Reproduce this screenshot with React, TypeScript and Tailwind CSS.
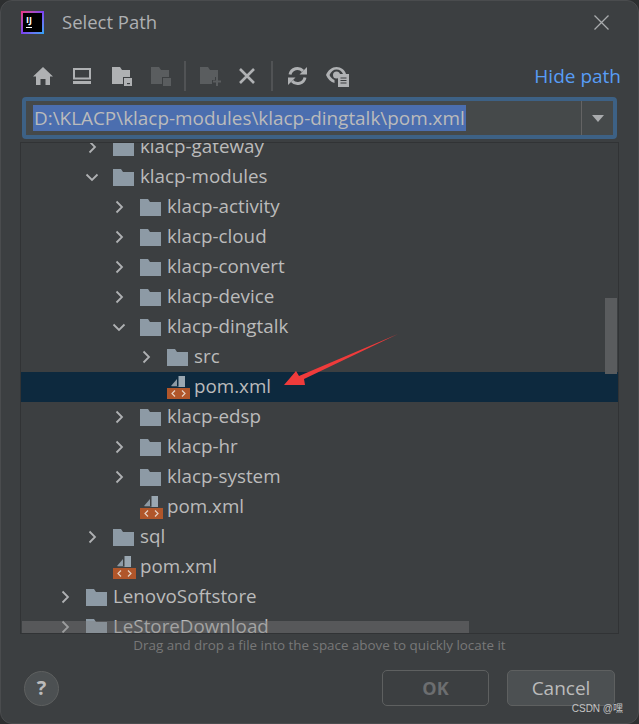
const rows = [
  { depth: 1, open: false, kind: 'folder', name: 'klacp-gateway' },
  { depth: 1, open: true, kind: 'folder', name: 'klacp-modules' },
  { depth: 2, open: false, kind: 'folder', name: 'klacp-activity' },
  { depth: 2, open: false, kind: 'folder', name: 'klacp-cloud' },
  { depth: 2, open: false, kind: 'folder', name: 'klacp-convert' },
  { depth: 2, open: false, kind: 'folder', name: 'klacp-device' },
  { depth: 2, open: true, kind: 'folder', name: 'klacp-dingtalk' },
  { depth: 3, open: false, kind: 'folder', name: 'src' },
  { depth: 3, open: false, kind: 'file', name: 'pom.xml', selected: true },
  { depth: 2, open: false, kind: 'folder', name: 'klacp-edsp' },
  { depth: 2, open: false, kind: 'folder', name: 'klacp-hr' },
  { depth: 2, open: false, kind: 'folder', name: 'klacp-system' },
  { depth: 2, open: false, kind: 'file', name: 'pom.xml' },
  { depth: 1, open: false, kind: 'folder', name: 'sql' },
  { depth: 1, open: false, kind: 'file', name: 'pom.xml' },
  { depth: 0, open: false, kind: 'folder', name: 'LenovoSoftstore' },
  { depth: 0, open: false, kind: 'folder', name: 'LeStoreDownload' },
]

const indents = ['w-[51px]', 'w-[78px]', 'w-[105px]', 'w-[132px]']

function Chevron({ open }: { open: boolean }) {
  return (
    <svg width="14" height="14" viewBox="0 0 14 14" fill="none" stroke="#afb1b3" strokeWidth="1.8">
      {open ? <path d="M1.5 4.5 7 10l5.5-5.5" /> : <path d="M4.5 1.5 10 7l-5.5 5.5" />}
    </svg>
  )
}

function Folder() {
  return (
    <svg width="21" height="18" viewBox="0 0 21 18" className="shrink-0">
      <path d="M0 1h8l2 3h11v14H0z" fill="#8d9aa5" />
    </svg>
  )
}

function PomIcon() {
  return (
    <svg width="23" height="24" viewBox="0 0 23 24" className="shrink-0">
      <path d="M4 11 10 4v7z" fill="#8d9aa5" />
      <path d="M11.5 1H18v11H4.500v-.2h7z" fill="#9aa7b1" />
      <rect x="0" y="13" width="23" height="11" fill="#b0562a" />
      <path d="M8 15.500 5 18.500l3 3M15 15.500l3 3-3 3" fill="none" stroke="#e6d2c4" strokeWidth="1.2" />
    </svg>
  )
}

function TreeRow({ row }: { row: (typeof rows)[number] }) {
  return (
    <div className={`flex h-[30px] items-center ${row.selected ? 'bg-[#0d293e]' : ''}`}>
      <div className={`${indents[row.depth]} flex shrink-0 justify-end`}>
        {row.kind === 'folder' && <Chevron open={row.open} />}
      </div>
      <div className={`flex items-center ${row.kind === 'folder' ? 'ml-[14px] gap-[6px]' : 'ml-[14px] gap-[4px]'}`}>
        {row.kind === 'folder' ? <Folder /> : <PomIcon />}
        <span className="pb-[2px] text-[18.800px] leading-[28px] text-[#bbbbbb]">{row.name}</span>
      </div>
    </div>
  )
}

function Toolbar() {
  const on = '#afb1b3'
  const off = '#5a5d5f'
  return (
    <div className="flex h-[40px] items-center pl-[32px]">
      {/* Home */}
      <svg width="20" height="18" viewBox="0 0 20 18" fill={on}>
        <path d="M10 0 20 9.500h-3V18h-4.500v-6h-5v6H3V9.500H0z" />
      </svg>
      {/* Desktop */}
      <svg width="18" height="16" viewBox="0 0 18 16" fill="none" className="ml-[20px]">
        <rect x="1" y="1" width="16" height="9.500" stroke={on} strokeWidth="2" />
        <rect x="0" y="13" width="18" height="3" fill={on} />
      </svg>
      {/* Project */}
      <svg width="20" height="19" viewBox="0 0 20 19" fill={on} className="ml-[21px]">
        <path d="M0 0h8l2 3h8v7h-7v7H0z" />
        <path d="M12 11h8v8h-8z" />
        <path d="M15 16h3v1.200h-3z" fill="#3c3f41" />
      </svg>
      {/* Module, disabled */}
      <svg width="20" height="19" viewBox="0 0 20 19" fill={off} className="ml-[19px]">
        <path d="M0 0h8l2 3h8v7h-7v7H0z" />
        <path d="M12 11h8v8h-8z" />
      </svg>
      <div className="ml-[13px] h-[30px] w-[2px] bg-[#515355]" />
      {/* New folder, disabled */}
      <svg width="21" height="19" viewBox="0 0 21 19" fill={off} className="ml-[14px]">
        <path d="M0 0h8l2 3h8v7h-3v3h-3v4H0z" />
        <path d="M16 10h2v3.500h3v2h-3V19h-2v-3.500h-3v-2h3z" />
      </svg>
      <svg width="16" height="16" viewBox="0 0 16 16" fill="none" stroke={on} strokeWidth="2.6" className="ml-[18px]">
        <path d="m1 1 14 14M15 1 1 15" />
      </svg>
      <div className="ml-[16px] h-[30px] w-[2px] bg-[#515355]" />
      {/* Refresh */}
      <svg width="19" height="20" viewBox="0 0 19 20" fill="none" stroke={on} strokeWidth="3" className="ml-[15px]">
        <path d="M2 8.500A7.500 7.500 0 0 1 15 5" />
        <path d="M17 11.500A7.500 7.500 0 0 1 4 15" />
        <path d="M11.500 8.500H19V1z" fill={on} stroke="none" />
        <path d="M7.500 11.500H0V19z" fill={on} stroke="none" />
      </svg>
      {/* Show hidden files */}
      <svg width="23" height="21" viewBox="0 0 23 21" className="ml-[19px]">
        <path d="M0 9C2 4 6 1 10.500 1S19 4 20 8h-3c-1-2.500-3.500-4.500-6.500-4.500S5 5.500 3.500 9c1 2.500 3 4 5 5v3C5 16 1.500 13 0 9z" fill={on} />
        <circle cx="10.500" cy="9" r="3.500" fill={on} />
        <rect x="12" y="8" width="11" height="13" fill={on} />
        <path d="M14.500 12h6M14.500 14.500h6M14.500 17h6" stroke="#3c3f41" strokeWidth="1.200" />
      </svg>
      <span className="ml-auto pr-[17px] text-[19px] text-[#589df6]">Hide path</span>
    </div>
  )
}

export default function App() {
  return (
    <div className="h-[724px] w-[639px] bg-[#2d2f30]" style={{ fontFamily: '"Open Sans", sans-serif' }}>
      <div className="flex h-full flex-col rounded-[12px] border border-[#4a4c4e] bg-[#3c3f41]">
        {/* Title */}
        <div className="flex h-[55px] shrink-0 items-center pb-[13px] pl-[20px] pr-[29px]">
          <div className="flex h-[23px] w-[23px] items-center justify-center bg-gradient-to-br from-[#f0297a] via-[#7a3ff0] to-[#1fa6f5] p-[2px]">
            <div className="flex h-full w-full flex-col bg-black px-[3px] pt-[2px] text-[9px] font-bold leading-[9px] text-white">
              IJ
              <div className="mt-[3px] h-[1px] w-[6px] bg-white" />
            </div>
          </div>
          <span className="ml-[18px] text-[18.500px] text-[#aeb0b2]">Select Path</span>
          <svg width="15" height="15" viewBox="0 0 15 15" stroke="#a9abad" strokeWidth="1.300" className="ml-auto">
            <path d="m.5.500 14 14M14.500.500l-14 14" />
          </svg>
        </div>

        <Toolbar />

        {/* Path input */}
        <div className="mx-[21px] mt-[1px] flex h-[42px] shrink-0 rounded-[4px] border-[4px] border-[#3d6185] bg-[#45494a] pl-[7px]">
          <div className="flex flex-1 items-center">
            <span className="h-[26px] whitespace-nowrap bg-[#4b6eaf] pl-[1px] pr-[1px] text-[18.900px] leading-[26px] text-[#bbbbbb]">
              D:\KLACP\klacp-modules\klacp-dingtalk\pom.xml
            </span>
          </div>
          <div className="flex w-[32px] items-center justify-center border-l border-[#646464]">
            <div className="h-0 w-0 border-x-[6px] border-t-[7px] border-x-transparent border-t-[#a9abad]" />
          </div>
        </div>

        {/* File tree */}
        <div className="relative mx-[19px] mt-[3px] h-[492px] shrink-0 overflow-hidden border border-[#313335]">
          <div className="-mt-[11px]">
            {rows.map((row, i) => (
              <TreeRow key={i} row={row} />
            ))}
          </div>
          <div className="absolute right-[1px] top-[155px] h-[76px] w-[12px] bg-[#5a5c5e]" />
          <div className="absolute bottom-0 left-[1px] h-[12px] w-[447px] bg-[#808080]/40" />
          <svg width="120" height="60" viewBox="0 0 120 60" className="absolute left-[262px] top-[189px]">
            <path d="M1 53 13 39l3 5L115 2 21 47l1 6z" fill="#ef3b3b" />
          </svg>
        </div>

        <div className="mt-[1px] shrink-0 text-center text-[13.400px] leading-[20px] text-[#787878]">
          Drag and drop a file into the space above to quickly locate it
        </div>

        {/* Footer */}
        <div className="relative mt-[15px] flex shrink-0 items-center pl-[23px] pr-[23px]">
          <div className="flex h-[35px] w-[35px] items-center justify-center rounded-full border border-[#5e6060] bg-[#4c5052] text-[20px] font-bold text-[#bbbbbb]">
            ?
          </div>
          <div className="ml-auto flex gap-[18px]">
            <div className="flex h-[36px] w-[107px] items-center justify-center rounded-[5px] border border-[#5e6060] text-[18px] font-bold text-[#6c6e70]">
              OK
            </div>
            <div className="flex h-[36px] w-[108px] items-center justify-center rounded-[5px] border border-[#5e6060] bg-[#4c5052] text-[19px] text-[#bbbbbb]">
              Cancel
            </div>
          </div>
          <span className="absolute right-[15px] top-[32px] text-[10px] leading-[14px] text-[#c4c4c4]" style={{ fontFamily: '"Liberation Sans", "Noto Sans CJK SC", sans-serif' }}>
            CSDN @嘿
          </span>
        </div>
      </div>
    </div>
  )
}
